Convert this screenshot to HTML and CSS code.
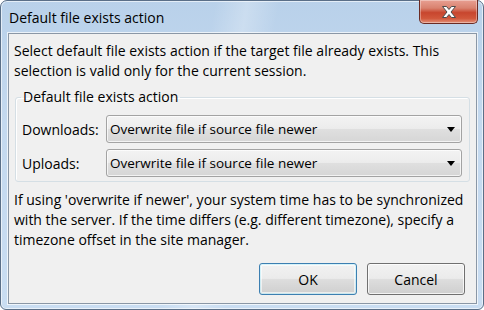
FILE: index.html
```html
<html>
  <head>
    <link rel="stylesheet" href="styles.css">
  </head>
  <body>
    <div class="window">
      <div class="titlebar">
        <span class="title">Default file exists action</span>
        <div class="close-btn">
          <svg width="16" height="12" viewBox="0 0 16 12">
            <path d="M1.5 0.5 H5.5 L8 3.5 L10.5 0.5 H14.5 L10 6 L14.5 11.5 H10.5 L8 8.5 L5.5 11.5 H1.5 L6 6 Z"
                  fill="#ffffff" stroke="#4b4b4b" stroke-width="1" stroke-linejoin="round" />
          </svg>
        </div>
      </div>
      <div class="client">
        <p class="text">Select default file exists action if the target file already exists. This selection is valid only for the current session.</p>
        <fieldset class="group">
          <legend>Default file exists action</legend>
          <div class="row">
            <label>Downloads:</label>
            <div class="combo"><span>Overwrite file if source file newer</span><i class="arrow"></i></div>
          </div>
          <div class="row">
            <label>Uploads:</label>
            <div class="combo"><span>Overwrite file if source file newer</span><i class="arrow"></i></div>
          </div>
        </fieldset>
        <p class="text note">If using 'overwrite if newer', your system time has to be synchronized with the server. If the time differs (e.g. different timezone), specify a timezone offset in the site manager.</p>
        <div class="buttons">
          <div class="btn is-default">OK</div>
          <div class="btn">Cancel</div>
        </div>
      </div>
    </div>
  </body>
</html>
```

FILE: styles.css
```css
:root {
  --color-client: #f0f0f0;
  --color-text: #000000;
  --font-ui: 'Open Sans', 'Noto Sans', 'DejaVu Sans', sans-serif;
}

* {
  box-sizing: border-box;
}

html,
body {
  margin: 0;
  width: 484px;
  height: 310px;
  background: #ffffff;
  overflow: hidden;
}

body {
  font-family: var(--font-ui);
  font-size: 14px;
  color: var(--color-text);
}

.window {
  width: 484px;
  height: 310px;
  display: flex;
  flex-direction: column;
  border: 1px solid #5a6f88;
  border-radius: 7px 7px 6px 6px;
  background:
    linear-gradient(100deg, rgba(255,255,255,0) 40%, rgba(255,255,255,0.25) 46%, rgba(255,255,255,0) 52%),
    linear-gradient(180deg, #b9d1ea 0%, #c4d9ef 40%, #c9ddf2 100%);
  box-shadow: inset 0 0 0 1px rgba(255,255,255,0.6);
}

.titlebar {
  height: 32px;
  display: flex;
  align-items: flex-start;
  justify-content: space-between;
  padding-left: 8px;
  padding-right: 5px;
}

.title {
  margin-top: 7px;
  font-size: 14px;
  line-height: 20px;
}

.close-btn {
  width: 59px;
  height: 24px;
  margin-top: -1px;
  display: flex;
  align-items: center;
  justify-content: center;
  border: 1px solid #6b2b24;
  border-top: none;
  border-radius: 0 0 5px 5px;
  background: linear-gradient(180deg, #e8a093 0%, #d9826f 35%, #c8462e 55%, #d1573b 80%, #e3917a 100%);
  box-shadow: inset 0 0 0 1px rgba(255,255,255,0.35);
}

.client {
  flex: 1;
  margin: 0 6px 5px 7px;
  display: flex;
  flex-direction: column;
  padding: 7px 6px 8px 5px;
  background: var(--color-client);
  border: 1px solid #8a97a6;
  box-shadow: 0 0 0 1px rgba(255,255,255,0.7);
}

.text {
  margin: 0;
  line-height: 20px;
}

.group {
  margin: 6px 0 0 1px;
  padding: 8px 7px 4px 5px;
  border: 1px solid #d5dfe5;
  border-radius: 3px;
  box-shadow: inset 1px 1px 0 #ffffff;
}

.group legend {
  padding: 0 2px;
  line-height: 20px;
}

.row {
  display: grid;
  grid-template-columns: 85px 1fr;
  align-items: center;
}

.row + .row {
  margin-top: 6px;
}

.row label {
  padding-left: 1px;
}

.combo {
  height: 28px;
  display: flex;
  align-items: center;
  justify-content: space-between;
  padding: 0 6px 0 3px;
  font-size: 13.5px;
  border: 1px solid #a3a3a3;
  border-radius: 3px;
  background: linear-gradient(180deg, #f3f3f3 0%, #ececec 48%, #dfdfdf 52%, #d6d6d6 100%);
  box-shadow: inset 0 0 0 1px rgba(255,255,255,0.7);
}

.arrow {
  width: 0;
  height: 0;
  border-left: 4px solid transparent;
  border-right: 4px solid transparent;
  border-top: 5px solid #000000;
}

.note {
  margin-top: 8px;
}

.buttons {
  margin-top: auto;
  display: flex;
  justify-content: flex-end;
  gap: 10px;
  padding-right: 5px;
}

.btn {
  width: 98px;
  height: 32px;
  display: flex;
  align-items: center;
  justify-content: center;
  border: 1px solid #707070;
  border-radius: 3px;
  background: linear-gradient(180deg, #f2f2f2 0%, #ebebeb 48%, #dddddd 52%, #cfcfcf 100%);
  box-shadow: inset 0 0 0 1px rgba(255,255,255,0.75);
}

.btn.is-default {
  border-color: #3c7fb1;
  box-shadow: inset 0 0 0 1px #48d7fb33, inset 0 0 0 2px rgba(255,255,255,0.6);
}
```
